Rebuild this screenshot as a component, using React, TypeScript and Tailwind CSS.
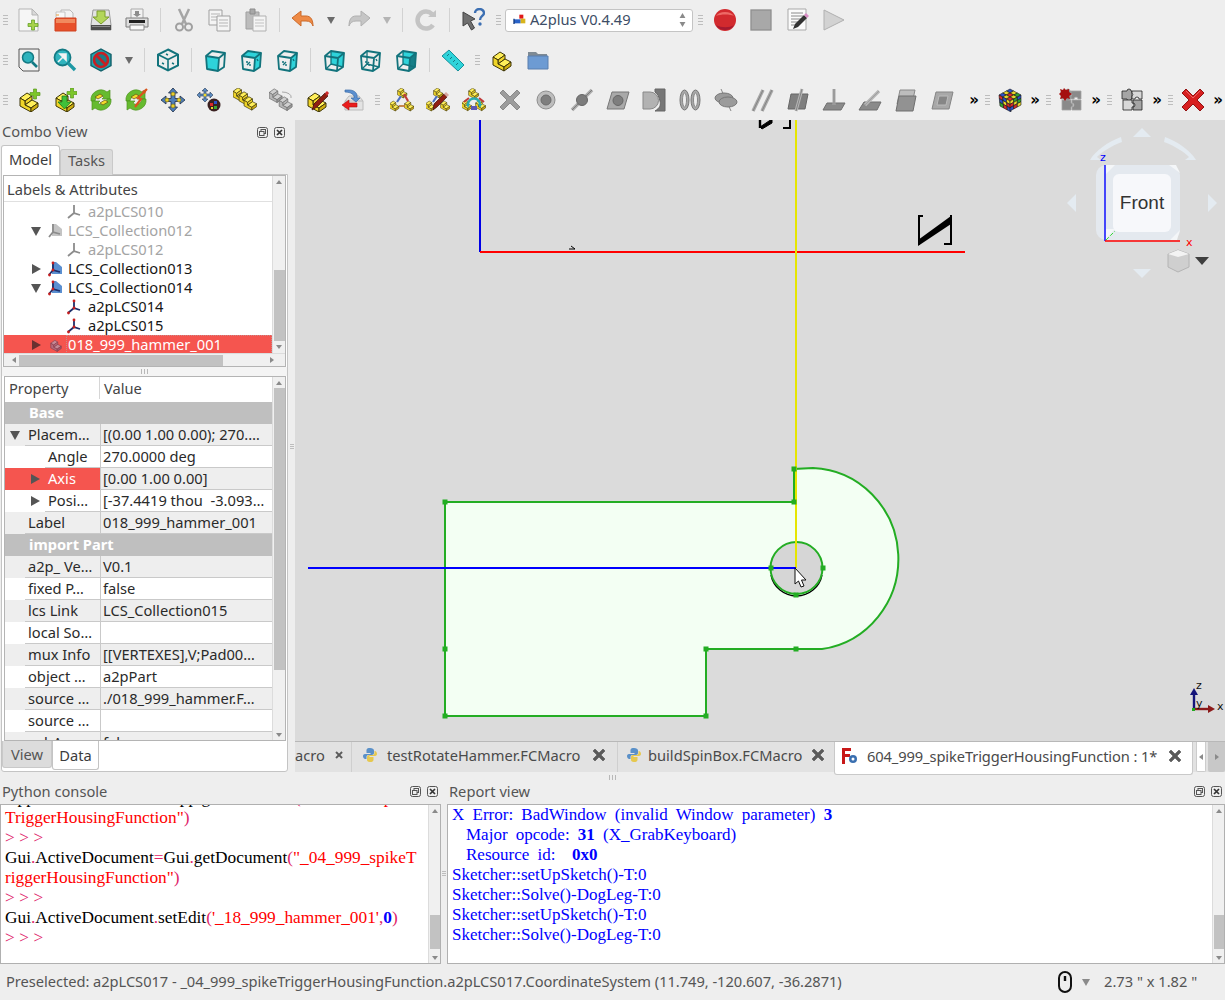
import React from "react";

const UI = { fontFamily: '"Noto Sans", sans-serif' };
const SERIF = { fontFamily: '"Liberation Serif", serif' };

const Svg = ({ children, s = 24 }: { children: React.ReactNode; s?: number }) => (
  <svg width={s} height={s} viewBox="0 0 24 24" fill="none">{children}</svg>
);

const Block = ({ t = "", c = "y" }: { t?: string; c?: "y" | "g" | "r" }) => {
  const p = {
    y: ["#ffef5a", "#f0d528", "#cfae10", "#3d3508"],
    g: ["#cfcfcf", "#b5b5b5", "#9a9a9a", "#6f6f6f"],
    r: ["#c58a96", "#b56a7a", "#a25568", "#7d3a4a"],
  }[c];
  return (
    <g transform={t} stroke={p[3]} strokeWidth="1" strokeLinejoin="round">
      <polygon points="3,9 10,4 15,7 8,12" fill={p[0]} />
      <polygon points="8,12 15,7 15,11 8,16" fill={p[1]} />
      <polygon points="8,16 15,11 21,14 14,19" fill={p[0]} />
      <polygon points="3,9 8,12 8,16 14,19 14,23 3,17" fill={p[1]} />
      <polygon points="14,19 21,14 21,18 14,23" fill={p[2]} />
    </g>
  );
};

const Plus = ({ x = 18, y = 6, c = "#7cc62a" }: { x?: number; y?: number; c?: string }) => (
  <path d={`M${x - 1.5} ${y - 5}h3v3.5h3.5v3h-3.5v3.5h-3v-3.5h-3.5v-3h3.5z`} fill={c} stroke="#5a9a1c" strokeWidth=".7" />
);

const Cube = ({ f = [], hidden = false, marks = false }: { f?: string[]; hidden?: boolean; marks?: boolean }) => {
  const faces: Record<string, string> = {
    front: "3,8 16,10 15,23 4,21",
    top: "3,8 9,3 22,5 16,10",
    right: "16,10 22,5 21,19 15,23",
    back: "9,3 22,5 21,19 9,16",
    left: "3,8 9,3 9,16 4,21",
  };
  return (
    <Svg>
      {f.map((k) => <polygon key={k} points={faces[k]} fill={k === "right" && f.includes("back") ? "#157f88" : "#2ed3da"} />)}
      <g stroke="#12737c" strokeWidth="1.8" strokeLinejoin="round">
        <polygon points="3,8 9,3 22,5 21,19 15,23 4,21" />
        <path d="M3 8L16 10L22 5M16 10L15 23" />
        {hidden && <path d="M9 3L9 16L21 19M9 16L4 21" strokeWidth="1.3" />}
      </g>
      {marks && <path d="M8 17l3-3M7 14h2M11 18v-2M18 11l1 2" stroke="#12737c" strokeWidth="1.4" />}
    </Svg>
  );
};

const GR = { fill: "#9b9b9b", stroke: "#777777", strokeWidth: 1 };

const RubikFace = ({ o, u, v, cs }: { o: number[]; u: number[]; v: number[]; cs: string[] }) => (
  <g stroke="#161616" strokeWidth=".6">
    {cs.map((c, k) => {
      const i = k % 3;
      const j = Math.floor(k / 3);
      const pt = (a: number, b: number) => `${o[0] + (u[0] * a) / 3 + (v[0] * b) / 3},${o[1] + (u[1] * a) / 3 + (v[1] * b) / 3}`;
      return <polygon key={k} points={`${pt(i, j)} ${pt(i + 1, j)} ${pt(i + 1, j + 1)} ${pt(i, j + 1)}`} fill={c} />;
    })}
  </g>
);

const PuzzleSet = ({ a, b, s }: { a: string; b: string; s: string }) => (
  <>
    <path d="M2 3h5a2 2 0 0 1 4 0h1v8h-1a2 2 0 0 1-4 0H2z" fill={a} stroke={s} strokeWidth=".8" />
    <path d="M12 3h10v8h-3a2 2 0 0 0-4 0h-3v-3a2 2 0 0 0 0-3z" fill={b} stroke={s} strokeWidth=".8" />
    <path d="M3 12h9v3a2 2 0 0 1 0 4v3H3z" fill={b} stroke={s} strokeWidth=".8" />
    <path d="M13 12h9v10h-9v-3a2 2 0 0 0 0-4z" fill={a} stroke={s} strokeWidth=".8" />
  </>
);

const Icons: Record<string, React.ReactNode> = {
  newdoc: (
    <Svg>
      <path d="M2 1h13l6 6v16H2z" fill="#f6f6f6" stroke="#b5b5b5" />
      <path d="M15 1v6h6z" fill="#d9d9d9" stroke="#b5b5b5" />
      <Plus x={16} y={17} c="#a6d24a" />
    </Svg>
  ),
  open: (
    <Svg>
      <path d="M8 2h9l3 3v8H8z" fill="#f3f3f3" stroke="#b9b9b9" />
      <path d="M3 4h9v9H3z" fill="#f8f8f8" stroke="#c4c4c4" />
      <path d="M3 7h3" stroke="#e8a040" />
      <path d="M2 11l1-1h20v13H2z" fill="#e8502a" stroke="#cf4320" />
      <path d="M3 11h19v4H3z" fill="#f18a5e" />
    </Svg>
  ),
  save: (
    <Svg>
      <path d="M4 2h16l2 15v5H2v-5z" fill="#e3e3e3" stroke="#9a9a9a" />
      <path d="M2 17h20v5H2z" fill="#4d4d4d" />
      <path d="M3 18h18v1H3z" fill="#8a8a8a" />
      <path d="M8 3h8v6h4l-8 7-8-7h4z" fill="#b3d65a" stroke="#7d9e2d" />
    </Svg>
  ),
  print: (
    <Svg>
      <path d="M6 1h12v10H6z" fill="#f2f2f2" stroke="#aaa" />
      <path d="M10 3h4v3h2l-4 3-4-3h2z" fill="#8d8d8d" />
      <path d="M1 10h22v9H1z" fill="#dcdcdc" stroke="#7c7c7c" />
      <path d="M4 12h16v3H4z" fill="#222" />
      <path d="M5 17h14v5H5z" fill="#fafafa" stroke="#888" />
    </Svg>
  ),
  cut: (
    <Svg>
      <path d="M7 1l7 15M17 1l-7 15" stroke="#a5a5a5" strokeWidth="2.5" />
      <circle cx="7.5" cy="19" r="3.5" stroke="#a0a0a0" strokeWidth="2" />
      <circle cx="16.5" cy="19" r="3.5" stroke="#a0a0a0" strokeWidth="2" />
    </Svg>
  ),
  copy: (
    <Svg>
      <path d="M1 2h13v15H1z" fill="#f4f4f4" stroke="#9f9f9f" />
      <path d="M3 6h9M3 9h9M3 12h9" stroke="#b5b5b5" />
      <path d="M9 8h13v15H9z" fill="#f4f4f4" stroke="#9f9f9f" />
      <path d="M11 12h9M11 15h9M11 18h9" stroke="#b5b5b5" />
    </Svg>
  ),
  paste: (
    <Svg>
      <path d="M2 4h13v17H2z" fill="#bcbcbc" stroke="#9f9f9f" />
      <path d="M6 1h5v5H6z" fill="#a8a8a8" stroke="#8c8c8c" />
      <path d="M9 8h13v15H9z" fill="#f4f4f4" stroke="#b0b0b0" />
      <path d="M11 12h9M11 15h9M11 18h9" stroke="#c2c2c2" />
    </Svg>
  ),
  undo: (
    <Svg>
      <path d="M10 4v5h5c5 0 7 4 7 10-1-3-3-5-7-5h-5v5L1 11z" transform="translate(0 -1)" fill="#ee8a45" stroke="#cc6a2a" strokeLinejoin="round" />
    </Svg>
  ),
  redo: (
    <Svg>
      <path d="M14 4v5H9c-5 0-7 4-7 10 1-3 3-5 7-5h5v5l9-8z" transform="translate(0 -1)" fill="#c6c6c6" stroke="#b0b0b0" strokeLinejoin="round" />
    </Svg>
  ),
  refresh: (
    <Svg>
      <path d="M19 17a8.5 8.5 0 1 1-1-11" stroke="#c4c4c4" strokeWidth="4.5" />
      <path d="M14 9h8V2z" fill="#c4c4c4" />
    </Svg>
  ),
  help: (
    <Svg>
      <path d="M3 3l12 7-4.500 2 4 7-3 2-4-7L3 17z" fill="#6f6f6f" stroke="#444" strokeLinejoin="round" transform="translate(-1 1)" />
      <path d="M14 5c0-2.500 2-4 4.500-4S23 3 23 5c0 3-4 3-4 7" stroke="#3c6fb2" strokeWidth="2.400" />
      <circle cx="19" cy="16" r="1.700" fill="#3c6fb2" />
    </Svg>
  ),
  record: (
    <Svg>
      <circle cx="12" cy="12" r="11" fill="#d22a2e" />
      <path d="M3 8a10 7 0 0 1 18 0c-4-2-13-2-18 0z" fill="#ed6a66" />
      <path d="M3 17a10 9 0 0 0 18 0c-4 3-13 3-18 0z" fill="#a51a30" />
    </Svg>
  ),
  stop: (
    <Svg>
      <rect x="2" y="2" width="20" height="20" fill="#a8a8a8" stroke="#8f8f8f" strokeWidth="1.300" />
    </Svg>
  ),
  macro: (
    <Svg>
      <path d="M3 1h18v21H3z" fill="#fbfbfb" stroke="#a9a9a9" />
      <path d="M6 5h12M6 8h12M6 11h12M6 14h7M6 17h4" stroke="#8a8a8a" />
      <path d="M8 21l2-5 9-9 3 3-9 9z" fill="#333" />
      <path d="M19 7l2-2 3 3-2 2z" fill="#d88cc4" />
    </Svg>
  ),
  play: (
    <Svg>
      <path d="M3 2l20 10L3 22z" fill="#d2d2d2" stroke="#b0b0b0" />
    </Svg>
  ),
  fitall: (
    <Svg>
      <path d="M2 1h20v22H6l-4-4z" fill="#f1f1f1" stroke="#555" />
      <circle cx="11" cy="9.500" r="5.500" fill="#2fb3bd" stroke="#137a84" strokeWidth="1.500" />
      <path d="M15 14l5 5" stroke="#137a84" strokeWidth="2.600" />
    </Svg>
  ),
  fitsel: (
    <Svg>
      <circle cx="9.500" cy="9.500" r="8" fill="#2fb3bd" stroke="#137a84" strokeWidth="1.800" />
      <path d="M15 15l7 7" stroke="#1d98a4" strokeWidth="3.400" />
      <path d="M5 14l7-7M7 6h6v6z" stroke="#f3f3f3" strokeWidth="1.600" fill="#f3f3f3" />
    </Svg>
  ),
  nodraw: (
    <Svg>
      <path d="M12 1l10 5.500v11L12 23 2 17.500v-11z" fill="#22a3ae" stroke="#12606a" strokeWidth="1.400" />
      <circle cx="12" cy="12" r="7" stroke="#c81e22" strokeWidth="2.600" fill="#1b7c86" />
      <path d="M7 7l10 10" stroke="#c81e22" strokeWidth="2.600" />
    </Svg>
  ),
  iso: (
    <Svg>
      <path d="M12 1.500l10 5v11l-10 5-10-5v-11z" stroke="#12737c" strokeWidth="2" />
      <path d="M2 6.500l10 5 10-5M12 11.500v11" stroke="#12737c" strokeWidth="1.600" />
      <path d="M6 15l2 1M16 15l2 1M10 6l2 1" stroke="#12737c" strokeWidth="1.400" />
    </Svg>
  ),
  front: <Cube f={["front"]} />,
  top: <Cube f={["top", "right"]} marks />,
  right: <Cube f={["right"]} marks />,
  rear: <Cube f={["back"]} hidden />,
  bottom: <Cube hidden marks />,
  leftv: <Cube f={["back", "right"]} hidden />,
  ruler: (
    <Svg>
      <path d="M1 8l7-6 15 15-6 6z" fill="#2ed3da" stroke="#17909a" />
      <path d="M6 8l2-2M9 11l2-2M12 14l2-2M15 17l2-2" stroke="#137a84" />
    </Svg>
  ),
  part: <Svg><Block /></Svg>,
  folder: (
    <Svg>
      <path d="M2 4h8l2 2h9v4H2z" fill="#7e8a94" />
      <path d="M2 8h20v13H2z" fill="#6d9bd3" stroke="#5a7fae" />
    </Svg>
  ),
  a1: <Svg><Block t="translate(0 1)" /><Plus x={18} y={6} /></Svg>,
  a2: (
    <Svg>
      <Block t="translate(0 1)" />
      <Plus x={19} y={5} />
      <path d="M9 8h5v6h4l-6.500 7L5 14h4z" fill="#3fc03a" stroke="#217a1d" strokeWidth=".8" />
    </Svg>
  ),
  a3: (
    <Svg>
      <path d="M2 13a10 10 0 0 1 16-9l3-2v9h-8l2-2c-4-3-8-1-9 4z" fill="#66bb2f" stroke="#4d931f" strokeWidth=".7" />
      <path d="M22 11a10 10 0 0 1-16 9l-3 2v-9h8l-2 2c4 3 8 1 9-4z" fill="#66bb2f" stroke="#4d931f" strokeWidth=".7" />
      <path d="M6 9l5-3 3 2-5 3zM11 15l5-3 3 2-5 3z" fill="#f1d92a" stroke="#5f5310" strokeWidth=".7" />
    </Svg>
  ),
  a4: (
    <Svg>
      <path d="M1 13a10 10 0 0 1 16-9l3-2v9h-8l2-2c-4-3-8-1-9 4z" fill="#66bb2f" stroke="#4d931f" strokeWidth=".7" />
      <path d="M21 11a10 10 0 0 1-16 9l-3 2v-9h8l-2 2c4 3 8 1 9-4z" fill="#66bb2f" stroke="#4d931f" strokeWidth=".7" />
      <path d="M6 9l5-3 3 2-5 3z" fill="#f1d92a" stroke="#5f5310" strokeWidth=".7" />
      <path d="M22 1l-9 9 3 1-6 8" stroke="#d9541e" strokeWidth="2.200" />
      <path d="M22 1l-5 2 3 3z" fill="#d9541e" />
    </Svg>
  ),
  a5: (
    <Svg>
      <path d="M12 0l4.500 5h-2.500v5.500H19V8l5 4-5 4v-2.500h-5V19h2.500L12 24l-4.500-5H10v-5.500H5V16l-5-4 5-4v2.500h5V5H7.500z" fill="#4f7fb8" stroke="#1f2d45" strokeWidth=".8" />
      <circle cx="12" cy="6" r="2" fill="#e8cf2a" stroke="#5f5310" strokeWidth=".5" />
      <circle cx="6" cy="12" r="2" fill="#e8cf2a" stroke="#5f5310" strokeWidth=".5" />
      <circle cx="18" cy="12" r="2" fill="#e8cf2a" stroke="#5f5310" strokeWidth=".5" />
      <circle cx="12" cy="18" r="2" fill="#e8cf2a" stroke="#5f5310" strokeWidth=".5" />
    </Svg>
  ),
  a6: (
    <Svg>
      <path d="M7 0l3 3H8v3h4V4l3 3-3 3V8H8v3h2l-3 3-3-3h2V8H2v2L-1 7l3-3v2h4V3H4z" transform="translate(1 0)" fill="#5b8ac0" stroke="#2c3e58" strokeWidth=".6" />
      <circle cx="8" cy="7" r="1.500" fill="#f1d92a" />
      <circle cx="17" cy="17" r="6.500" fill="#3a2020" />
      <path d="M13 15h3v3h-3z" fill="#d92a2a" />
      <path d="M17 13h3v3h-3z" fill="#2a52c8" />
      <path d="M17 18h3v3h-3z" fill="#37a533" />
      <path d="M14 19h2v2h-2z" fill="#e5d32a" />
    </Svg>
  ),
  a7: <Svg><Block t="translate(-2 -3) scale(.7)" /><Block t="translate(4 1) scale(.7)" /><Block t="translate(9 6) scale(.7)" /></Svg>,
  a8: (
    <Svg>
      <Block t="translate(-2 -2) scale(.72)" c="g" />
      <Block t="translate(8 6) scale(.72)" c="g" />
      <path d="M13 4a9 5 0 0 1 9 6" stroke="#a8a8a8" />
    </Svg>
  ),
  a9: (
    <Svg>
      <Block t="translate(0 1)" />
      <path d="M7 22l2-6 11-11 3 3-11 11z" fill="#8f1e12" stroke="#3a1008" strokeWidth=".7" />
      <path d="M20 5l2-2 2 2-2 3z" fill="#cf2a2a" />
    </Svg>
  ),
  a10: (
    <Svg>
      <path d="M4 13l4-5h10l4 5v9H4z" fill="#e3e3e3" stroke="#bbb" />
      <path d="M4 13h18" stroke="#bbb" />
      <path d="M4 2h4c6 0 9 4 8 8h3l-4 4-5-4h3c1-3-3-6-9-6z" fill="#5a8fd0" stroke="#3a6aa6" strokeWidth=".7" />
      <path d="M1 17l7-5v3h8v4H8v3z" fill="#ea1c1c" stroke="#a71010" strokeWidth=".6" />
    </Svg>
  ),
  c1: (
    <Svg>
      <Block t="translate(6 -2) scale(.52)" />
      <Block t="translate(-2 11) scale(.52)" />
      <Block t="translate(13 11) scale(.52)" />
      <path d="M7 14l4-6" stroke="#4a6fc0" strokeWidth="2.200" />
      <path d="M14 6l4 7" stroke="#c03a3a" strokeWidth="2.200" />
      <path d="M9 18h6" stroke="#c07a3a" strokeWidth="1.800" />
    </Svg>
  ),
  c2: (
    <Svg>
      <Block t="translate(6 -2) scale(.52)" />
      <Block t="translate(-2 11) scale(.52)" />
      <Block t="translate(13 11) scale(.52)" />
      <path d="M7 14l4-6" stroke="#4a6fc0" strokeWidth="2.200" />
      <path d="M7 22l1-6 10-10 3 3-10 10z" fill="#8f1e12" stroke="#3a1008" strokeWidth=".7" />
      <path d="M18 6l2-2 3 3-2 2z" fill="#d8a6a0" />
    </Svg>
  ),
  c3: (
    <Svg>
      <Block t="translate(5 -2) scale(.55)" />
      <Block t="translate(-2 10) scale(.55)" c="y" />
      <Block t="translate(12 10) scale(.55)" />
      <path d="M2 14l5-4M22 14l-5-4" stroke="#c03a3a" strokeWidth="2" />
      <path d="M6 16a6 6 0 1 1 12 1" stroke="#2baab0" strokeWidth="2.400" />
      <path d="M6 20l-2-4h4zM18 20l-2-4h4z" fill="#2baab0" />
      <path d="M9 18h6v4H9z" fill="#5b57b5" />
    </Svg>
  ),
  x: (
    <Svg>
      <path d="M2 5l3-3 7 7 7-7 3 3-7 7 7 7-3 3-7-7-7 7-3-3 7-7z" fill="#9c9c9c" stroke="#8a8a8a" strokeLinejoin="round" />
    </Svg>
  ),
  g1: (
    <Svg>
      <circle cx="12" cy="12" r="9" fill="#bdbdbd" stroke="#8e8e8e" />
      <circle cx="12" cy="12" r="5" fill="#7e7e7e" stroke="#6b6b6b" />
    </Svg>
  ),
  g2: (
    <Svg>
      <path d="M2 22L22 2" stroke="#aaa" strokeWidth="3.500" />
      <path d="M2 22L22 2" stroke="#7c7c7c" strokeWidth="1" />
      <circle cx="12" cy="12" r="5.500" fill="#7c7c7c" stroke="#666" />
    </Svg>
  ),
  g3: (
    <Svg>
      <path d="M6 4h17l-5 17H1z" {...GR} fill="#a9a9a9" />
      <circle cx="12" cy="12.500" r="5" fill="#7e7e7e" stroke="#666" />
    </Svg>
  ),
  g4: (
    <Svg>
      <path d="M1 4h7a8 8 0 0 1 0 17H1z" fill="#b2b2b2" stroke="#888" />
      <path d="M13 1h10v22H13c5-3 6-6 5-10s-2-7-5-9z" fill="#777" stroke="#666" />
    </Svg>
  ),
  g5: (
    <Svg>
      <ellipse cx="6.500" cy="12" rx="4.500" ry="10" fill="#a8a8a8" stroke="#777" />
      <ellipse cx="6.500" cy="12" rx="2" ry="7" fill="#eeeeee" stroke="#888" />
      <ellipse cx="17.500" cy="12" rx="4.500" ry="10" fill="#a8a8a8" stroke="#777" />
      <ellipse cx="17.500" cy="12" rx="2" ry="7" fill="#eeeeee" stroke="#888" />
    </Svg>
  ),
  g6: (
    <Svg>
      <path d="M7 1l10 22" stroke="#888" />
      <ellipse cx="10" cy="10" rx="9" ry="5" {...GR} />
      <ellipse cx="14" cy="14" rx="9" ry="5" {...GR} />
    </Svg>
  ),
  g7: (
    <Svg>
      <path d="M3 23L13 2M12 23L22 2" stroke="#a8a8a8" strokeWidth="3.400" />
      <path d="M3 23L13 2M12 23L22 2" stroke="#848484" strokeWidth="1" />
    </Svg>
  ),
  g8: (
    <Svg>
      <path d="M5 6h17l-3 15H2z" fill="#7f7f7f" stroke="#666" />
      <path d="M10 23L16 1" stroke="#b5b5b5" strokeWidth="3" />
      <path d="M10 23L16 1" stroke="#777" strokeWidth=".8" />
    </Svg>
  ),
  g9: (
    <Svg>
      <path d="M1 22l4-7h18l-4 7z" fill="#8a8a8a" stroke="#6f6f6f" />
      <path d="M12 1v16" stroke="#a8a8a8" strokeWidth="3" />
      <path d="M12 1v16" stroke="#888" strokeWidth=".8" />
    </Svg>
  ),
  g10: (
    <Svg>
      <path d="M1 22l5-8h17l-4 8z" fill="#8a8a8a" stroke="#6f6f6f" />
      <path d="M7 17L21 3" stroke="#b5b5b5" strokeWidth="3.200" />
      <path d="M7 17L21 3" stroke="#999" strokeWidth=".8" />
    </Svg>
  ),
  g11: (
    <Svg>
      <path d="M6 2h15l-3 14H3z" fill="#bdbdbd" stroke="#8a8a8a" />
      <path d="M5 8h17l-3 15H2z" fill="#929292" stroke="#6f6f6f" />
    </Svg>
  ),
  g12: (
    <Svg>
      <path d="M6 4h17l-4 17H2z" fill="#a8a8a8" stroke="#858585" />
      <path d="M9 8h9l-2 9H7z" fill="#868686" stroke="#bbb" />
    </Svg>
  ),
  rubik: (
    <Svg>
      <RubikFace o={[12, 1]} u={[11, 6]} v={[-11, 6]} cs={["#2a4fc8", "#e8d52a", "#2fa52f", "#e8d52a", "#d82a2a", "#e8d52a", "#2a4fc8", "#e8d52a", "#d82a2a"]} />
      <RubikFace o={[1, 7]} u={[11, 6]} v={[1, 11]} cs={["#d82a2a", "#2a4fc8", "#e8d52a", "#2a4fc8", "#e8d52a", "#d82a2a", "#2fa52f", "#d82a2a", "#2a4fc8"]} />
      <RubikFace o={[12, 13]} u={[11, -6]} v={[0, 10]} cs={["#e8d52a", "#2fa52f", "#2a4fc8", "#d82a2a", "#e8d52a", "#2fa52f", "#2a4fc8", "#d82a2a", "#e8d52a"]} />
    </Svg>
  ),
  puzzleR: (
    <Svg>
      <PuzzleSet a="#8a8a8a" b="#8a8a8a" s="#a5a5a5" />
      <path d="M5 0l2 2 3-1v3l3 2-3 2 1 3-3-1-2 3-2-3-3 1 1-3-2-2 2-2-1-3 3 1z" fill="#a50f0f" />
    </Svg>
  ),
  puzzle: (
    <Svg>
      <PuzzleSet a="#a5a5a5" b="#d8d8d8" s="#222" />
    </Svg>
  ),
  redx: (
    <Svg>
      <path d="M1 5l4-4 7 7 7-7 4 4-7 7 7 7-4 4-7-7-7 7-4-4 7-7z" fill="#d71f1f" stroke="#931212" strokeLinejoin="round" />
      <path d="M5 3l7 7 7-7" stroke="#ef6a6a" strokeWidth=".9" />
    </Svg>
  ),
  wb: (
    <Svg>
      <path d="M11 4h6v6h-6z" fill="#e01919" />
      <path d="M3 11h10v6H3z" fill="#2a63c8" />
      <path d="M13 10h7v7h-7z" fill="#d8b41c" />
      <path d="M3 10v8" stroke="#123a80" strokeWidth="2" />
    </Svg>
  ),
};

const Ic = ({ n, w = 36 }: { n: string; w?: number }) => (
  <div className="flex shrink-0 items-center justify-center" style={{ width: w }}>{Icons[n]}</div>
);

const Grip = ({ w = 14 }: { w?: number }) => (
  <div className="flex shrink-0 flex-col items-center gap-[2px]" style={{ width: w }}>
    <div className="h-px w-[5px] bg-[#bdbdbd]" />
    <div className="h-px w-[5px] bg-[#bdbdbd]" />
    <div className="h-px w-[5px] bg-[#bdbdbd]" />
    <div className="h-px w-[5px] bg-[#bdbdbd]" />
  </div>
);

const Sep = () => <div className="mx-[5px] h-[24px] w-px shrink-0 bg-[#d2d2d2]" />;

const Drop = ({ c = "#6b6b6b" }: { c?: string }) => (
  <div className="flex w-[20px] shrink-0 items-center justify-center">
    <svg width="8" height="8" viewBox="0 0 8 8"><path d="M0 1h8L4 8z" fill={c} /></svg>
  </div>
);

const More = () => (
  <div className="w-[20px] shrink-0 text-center text-[15px] leading-none font-bold text-black" style={{ fontFamily: '"DejaVu Sans", sans-serif' }}>»</div>
);

const DockBtns = ({ className = "" }: { className?: string }) => (
  <div className={`flex items-center gap-[6px] ${className}`}>
    <svg width="11" height="11" viewBox="0 0 11 11" fill="none" stroke="#555">
      <rect x=".5" y=".5" width="10" height="10" rx="2" />
      <rect x="4" y="2.500" width="4.500" height="4" />
      <rect x="2.500" y="4.500" width="4.500" height="4" fill="#eee" />
    </svg>
    <svg width="11" height="11" viewBox="0 0 11 11" fill="none" stroke="#555">
      <rect x=".5" y=".5" width="10" height="10" rx="2" />
      <path d="M3 3l5 5M8 3l-5 5" strokeWidth="1.700" stroke="#333" />
    </svg>
  </div>
);

const Tri = ({ open = false, c = "#555" }: { open?: boolean; c?: string }) => (
  <svg width="10" height="10" viewBox="0 0 10 10">
    {open ? <path d="M0 1h10L5 10z" fill={c} /> : <path d="M1 0l9 5-9 5z" fill={c} />}
  </svg>
);

const Axes = ({ dim = false }: { dim?: boolean }) => (
  <svg width="16" height="16" viewBox="0 0 16 16" fill="none">
    <path d="M8 1v8l6 2M8 9l-6 5" stroke={dim ? "#8c8c8c" : "#1e2f6b"} strokeWidth="1.800" />
    {!dim && <><circle cx="8" cy="2" r="1.400" fill="#c81e1e" /><circle cx="8" cy="9" r="1.400" fill="#c81e1e" /><circle cx="2.500" cy="14" r="1.400" fill="#c81e1e" /></>}
  </svg>
);

const Coll = ({ dim = false }: { dim?: boolean }) => (
  <svg width="16" height="16" viewBox="0 0 16 16" fill="none">
    <path d="M5 1h4l6 5v7H5z" fill={dim ? "#c4c4c4" : "#5b8fd0"} />
    <path d="M6 1v8l7 2M6 9l-4 5" stroke={dim ? "#8c8c8c" : "#1e2f6b"} strokeWidth="1.800" />
    {!dim && <><circle cx="6" cy="2" r="1.400" fill="#c81e1e" /><circle cx="6" cy="9" r="1.400" fill="#c81e1e" /><circle cx="2.500" cy="14" r="1.400" fill="#c81e1e" /></>}
  </svg>
);

const TreeLeaf = ({ t, dim = false }: { t: string; dim?: boolean }) => (
  <div className="flex h-[19px] items-center pl-[62px]">
    <Axes dim={dim} />
    <span className={`mb-[2px] ml-[6px] ${dim ? "text-[#a4a4a4]" : "text-[#161616]"}`}>{t}</span>
  </div>
);
const TreeColl = ({ t, open = false, dim = false }: { t: string; open?: boolean; dim?: boolean }) => (
  <div className="flex h-[19px] items-center pl-[27px]">
    <Tri open={open} />
    <div className="ml-[6px]"><Coll dim={dim} /></div>
    <span className={`mb-[2px] ml-[5px] ${dim ? "text-[#a4a4a4]" : "text-[#161616]"}`}>{t}</span>
  </div>
);

type Row = { n?: string; v?: string; g?: string; ind?: number; tri?: "o" | "c"; red?: boolean };
const rows: Row[] = [
  { g: "Base" },
  { n: "Placem…", v: "[(0.00 1.00 0.00); 270.…", tri: "o" },
  { n: "Angle", v: "270.0000 deg", ind: 1 },
  { n: "Axis", v: "[0.00 1.00 0.00]", ind: 1, tri: "c", red: true },
  { n: "Posi…", v: "[-37.4419 thou  -3.093…", ind: 1, tri: "c" },
  { n: "Label", v: "018_999_hammer_001" },
  { g: "import Part" },
  { n: "a2p_ Ve…", v: "V0.1" },
  { n: "fixed P…", v: "false" },
  { n: "lcs Link", v: "LCS_Collection015" },
  { n: "local So…", v: "" },
  { n: "mux Info", v: "[[VERTEXES],V;Pad00…" },
  { n: "object …", v: "a2pPart" },
  { n: "source …", v: "./018_999_hammer.F…" },
  { n: "source …", v: "" },
  { n: "subAss…", v: "false" },
];

const PropRow = ({ r, i }: { r: Row; i: number }) => {
  if (r.g)
    return <div className="flex h-[22px] shrink-0 items-center bg-[#bfbfbf] pb-[2px] pl-[24px] font-bold text-white">{r.g}</div>;
  const alt = i % 2 === 1;
  const bg = alt ? "bg-[#eeeeee]" : "bg-white";
  return (
    <div className={`flex h-[22px] shrink-0 ${bg} text-[#2a2a2a]`}>
      <div className={`flex w-[95px] shrink-0 ${r.red ? "bg-[#f5554f] text-white" : ""}`}>
        <div className="flex shrink-0 items-center justify-end pr-[5px]" style={{ width: r.ind ? 40 : 20 }}>
          {r.tri && <Tri open={r.tri === "o"} />}
        </div>
        <div className={`flex min-w-0 flex-1 items-center whitespace-nowrap border-b pb-[2px] pl-[3px] ${r.red ? "border-transparent" : "border-[#c9c9c9]"}`}>{r.n}</div>
      </div>
      <div className="flex flex-1 items-center overflow-hidden whitespace-pre border-b border-l border-[#c9c9c9] pb-[2px] pl-[2px]">{r.v}</div>
    </div>
  );
};

const ScrollArrow = ({ d }: { d: "u" | "d" | "l" | "r" }) => {
  const p = { u: "M0 5L3 1L6 5z", d: "M0 1L3 5L6 1z", l: "M5 0L1 3L5 6z", r: "M1 0L5 3L1 6z" }[d];
  return <svg width="6" height="6" viewBox="0 0 6 6"><path d={p} fill="#8a8a8a" /></svg>;
};

const TabClose = () => (
  <svg width="14" height="14" viewBox="0 0 14 14">
    <path d="M1 3l2-2 4 4 4-4 2 2-4 4 4 4-2 2-4-4-4 4-2-2 4-4z" fill="#5a5a5a" stroke="#444" strokeWidth=".5" strokeLinejoin="round" />
  </svg>
);

const Py = () => (
  <svg width="14" height="16" viewBox="0 0 14 16">
    <path d="M7 1C3 1 3.500 3 3.500 4.500V6h4v1H2C.5 7 0 8.500 0 9s.5 3 2 3h1.500v-2c0-1.500 1-2 2.500-2h3c1 0 2-.8 2-2V3.500C11 2 9.500 1 7 1z" fill="#5a90c8" />
    <path d="M7 15c4 0 3.500-2 3.500-3.500V10h-4V9H12c1.500 0 2-1.500 2-2s-.5-3-2-3h-.5v2c0 1.500-1 2-2.500 2H6C5 8 4 8.800 4 10v2.500C4 14 4.500 15 7 15z" fill="#e6c84e" />
  </svg>
);

const Punct = ({ children }: { children: React.ReactNode }) => <span className="text-[#e0246a]">{children}</span>;
const Str = ({ children }: { children: React.ReactNode }) => <span className="text-[#ff0000]">{children}</span>;
const Prompt = () => <div className="h-[20px] tracking-[4.500px] text-[#e0246a]">{">>>"}</div>;

const Viewport = () => (
  <svg className="absolute inset-0" width="930" height="621" viewBox="295 120 930 621" fill="none">
    <path d="M480 120V252" stroke="#0000e6" strokeWidth="2" />
    <path d="M480 252H965" stroke="#ff0000" strokeWidth="2" />
    <path d="M760 120V128" stroke="#000" strokeWidth="2.400" />
    <path d="M760 127L772 119L772 123L762 129Z" fill="#000" stroke="#000" />
    <path d="M790 120V128H783" stroke="#000" strokeWidth="2" />
    <path d="M571 246l4 3M569 249h6" stroke="#000" strokeWidth="1" />
    <path d="M919 245V216h4" stroke="#000" strokeWidth="2" />
    <path d="M951 215V244H944" stroke="#000" strokeWidth="2" />
    <path d="M918 240L951 216V224L918 246Z" fill="#000" />
    <path d="M445 502H794V469L813 468A89 91 0 0 1 822 649H706V716H445Z" fill="#f3fff3" stroke="#23ad23" strokeWidth="2" />
    <circle cx="796.500" cy="568" r="26" fill="#d6d6d6" />
    <path d="M771 575A26 26 0 0 0 822 575" stroke="#000" strokeWidth="1.400" />
    <circle cx="796.500" cy="568" r="26" stroke="#23ad23" strokeWidth="2" />
    <path d="M796 120V568" stroke="#e6e600" strokeWidth="2" />
    <path d="M308 568H796" stroke="#0000ff" strokeWidth="2" />
    <g fill="#23ad23">
      {[[445, 502], [794, 502], [794, 469], [706, 649], [796, 649], [445, 649], [445, 716], [706, 716], [823, 568], [771, 568], [796, 595]].map(([x, y]) => (
        <rect key={`${x}-${y}`} x={x - 2.500} y={y - 2.500} width="5" height="5" />
      ))}
    </g>
    <path d="M795 568V584L798.500 581L801 587L804 586L801.500 580L806 580Z" fill="#fff" stroke="#111" strokeWidth="1" strokeLinejoin="round" />

    {/* navigation cube */}
    <g fill="#e4ebf1">
      <path d="M1142 128l9 9h-18z" />
      <path d="M1142 278l9-9h-18z" />
      <path d="M1067 203l9-9v18z" />
      <path d="M1217 203l-9-9v18z" />
      <path d="M1090 160c6-10 18-18 31-23l1 5c-11 4-20 10-25 15l4 3z" />
      <path d="M1196 160c-6-10-18-18-31-23l-1 5c11 4 20 10 25 15l-4 3z" />
    </g>
    <rect x="1096" y="165" width="84" height="75" rx="10" fill="#e4e9ef" />
    <path d="M1105 165h10l-9 9zM1169 165h7l4 8zM1105 240l10-11-9 0zM1180 230l-10 10h7z" fill="#f4f6f8" />
    <rect x="1113" y="174" width="58" height="58" rx="6" fill="#f7f8fb" />
    <text x="1142" y="209" textAnchor="middle" fontSize="19" fill="#333" fontFamily='"Liberation Sans", sans-serif'>Front</text>
    <path d="M1105 165V241" stroke="#0000ff" strokeWidth="1.400" />
    <path d="M1105 241H1180" stroke="#ff0000" strokeWidth="1.400" />
    <path d="M1106 240l9-9" stroke="#33dd33" strokeWidth="1" strokeDasharray="4 2" />
    <text x="1100" y="161" fontSize="11" fill="#0000ff" fontFamily='"DejaVu Sans", sans-serif'>z</text>
    <text x="1186" y="246" fontSize="11" fill="#ff0000" fontFamily='"DejaVu Sans", sans-serif'>x</text>
    <path d="M1168 254l10-4 11 4v13l-11 5-10-5z" fill="#cfcfcf" stroke="#b4b4b4" />
    <path d="M1168 254l10 3 11-3-11-4z" fill="#f3f3f3" />
    <path d="M1195 257h14l-7 8z" fill="#3f3f3f" />

    {/* axis cross */}
    <path d="M1194 709V693" stroke="#14147a" strokeWidth="2.400" />
    <path d="M1194 688l4 7h-8z" fill="#14147a" />
    <path d="M1194 709H1209" stroke="#8b1a1a" strokeWidth="2.400" />
    <path d="M1215 709l-7-4v8z" fill="#8b1a1a" />
    <rect x="1192" y="708" width="3" height="3" fill="#22aa22" />
    <text x="1196" y="689" fontSize="11" fill="#111" fontFamily='"DejaVu Sans", sans-serif'>z</text>
    <text x="1196" y="707" fontSize="11" fill="#111" fontFamily='"DejaVu Sans", sans-serif'>y</text>
    <text x="1217" y="710" fontSize="11" fill="#111" fontFamily='"DejaVu Sans", sans-serif'>x</text>
  </svg>
);

export default function App() {
  return (
    <div className="flex h-[1000px] w-[1225px] flex-col overflow-hidden bg-[#eeeeee] text-[14.670px] text-[#3c3c3c]" style={UI}>
      {/* Toolbars */}
      <div className="flex h-[40px] shrink-0 items-center">
        <Grip w={11} />
        <Ic n="newdoc" /><Ic n="open" /><Ic n="save" /><Ic n="print" />
        <Sep />
        <Ic n="cut" /><Ic n="copy" /><Ic n="paste" />
        <Sep />
        <Ic n="undo" /><Drop /><Ic n="redo" /><Drop c="#b4b4b4" />
        <Sep />
        <Ic n="refresh" />
        <Sep />
        <Ic n="help" />
        <Grip />
        <div className="flex h-[23px] w-[188px] shrink-0 items-center rounded-[3px] border border-[#c4c4c4] bg-white pl-[6px] text-[#3d4d66]">
          <Ic n="wb" w={16} />
          <span className="mb-[2px] ml-[2px] flex-1 whitespace-nowrap">A2plus V0.4.49</span>
          <div className="mr-[6px] flex flex-col gap-[4px]">
            <svg width="7" height="5" viewBox="0 0 7 6"><path d="M0 6L3.500 0L7 6z" fill="#8a8a8a" /></svg>
            <svg width="7" height="5" viewBox="0 0 7 6"><path d="M0 0L3.500 6L7 0z" fill="#8a8a8a" /></svg>
          </div>
        </div>
        <Grip />
        <Ic n="record" /><Ic n="stop" /><Ic n="macro" /><Ic n="play" />
      </div>
      <div className="flex h-[40px] shrink-0 items-center">
        <Grip w={11} />
        <Ic n="fitall" /><Ic n="fitsel" /><Ic n="nodraw" /><Drop />
        <Sep />
        <Ic n="iso" />
        <Sep />
        <Ic n="front" /><Ic n="top" /><Ic n="right" />
        <Sep />
        <Ic n="rear" /><Ic n="bottom" /><Ic n="leftv" />
        <Sep />
        <Ic n="ruler" />
        <Grip w={13} />
        <Ic n="part" /><Ic n="folder" />
      </div>
      <div className="flex h-[40px] shrink-0 items-center">
        <Grip w={11} />
        {["a1", "a2", "a3", "a4", "a5", "a6", "a7", "a8", "a9", "a10"].map((n) => <Ic key={n} n={n} />)}
        <Grip w={13} />
        {["c1", "c2", "c3", "x", "g1", "g2", "g3", "g4", "g5", "g6", "g7", "g8", "g9", "g10", "g11", "g12"].map((n) => <Ic key={n} n={n} />)}
        <div className="ml-[4px]" />
        <More /><Grip w={6} /><div className="ml-[5px]" /><Ic n="rubik" w={30} />
        <More /><Grip w={6} /><div className="ml-[5px]" /><Ic n="puzzleR" w={30} />
        <More /><Grip w={6} /><div className="ml-[5px]" /><Ic n="puzzle" w={30} />
        <More /><Grip w={6} /><div className="ml-[5px]" /><Ic n="redx" w={30} />
        <More />
      </div>

      {/* Main */}
      <div className="flex h-[662px] shrink-0">
        <div className="flex w-[289px] shrink-0 flex-col">
          <div className="flex h-[25px] shrink-0 items-center justify-between pl-[2px] pr-[4px] text-[#555]">
            <span className="mb-[4px]">Combo View</span>
            <DockBtns />
          </div>
          <div className="z-10 flex h-[30px] shrink-0 items-end pl-[1px]">
            <div className="flex h-[30px] w-[59px] items-center justify-center rounded-t-[3px] border border-b-0 border-[#c4c4c4] bg-white pb-[4px] text-[#3c3c3c]">Model</div>
            <div className="flex h-[26px] w-[53px] items-center justify-center rounded-t-[3px] border border-b-0 border-[#c9c9c9] bg-[#dcdcdc] pb-[5px] text-[#555]">Tasks</div>
          </div>
          <div className="-mt-px ml-[1px] mr-[1px] flex h-[598px] flex-col rounded-b-[3px] border border-[#c4c4c4] bg-white">
            <div className="mx-[1px] flex h-[192px] shrink-0 flex-col border border-[#b4b4b4]">
              <div className="flex min-h-0 flex-1">
                <div className="min-w-0 flex-1 overflow-hidden whitespace-nowrap">
                  <div className="flex h-[26px] items-center border-b border-[#e0e0e0] pl-[3px] text-[#444]">Labels &amp; Attributes</div>
                  <TreeLeaf t="a2pLCS010" dim />
                  <TreeColl t="LCS_Collection012" open dim />
                  <TreeLeaf t="a2pLCS012" dim />
                  <TreeColl t="LCS_Collection013" />
                  <TreeColl t="LCS_Collection014" open />
                  <TreeLeaf t="a2pLCS014" />
                  <TreeLeaf t="a2pLCS015" />
                  <div className="flex h-[19px] items-center bg-[#f5554f] pl-[27px] text-white">
                    <Tri c="#6b3030" />
                    <svg className="ml-[8px]" width="14" height="14" viewBox="0 0 24 24"><Block c="r" /></svg>
                    <span className="ml-[3px] flex h-full flex-1 items-center pb-[2px] pl-[2px] outline-1 -outline-offset-1 outline-dotted outline-[#c98a8a]">018_999_hammer_001</span>
                  </div>
                </div>
                <div className="flex w-[13px] shrink-0 flex-col items-center border-l border-[#dcdcdc] bg-[#f0f0f0]">
                  <div className="flex h-[12px] items-center"><ScrollArrow d="u" /></div>
                  <div className="h-[82px]" />
                  <div className="h-[71px] w-[11px] bg-[#c2c2c2]" />
                  <div className="flex-1" />
                  <div className="flex h-[12px] items-center"><ScrollArrow d="d" /></div>
                </div>
              </div>
              <div className="flex h-[13px] shrink-0 items-center border-t border-[#dcdcdc] bg-[#f0f0f0] pl-[7px]">
                <ScrollArrow d="l" />
                <div className="ml-[2px] h-[11px] w-[204px] bg-[#c2c2c2]" />
                <div className="ml-[46px]"><ScrollArrow d="r" /></div>
              </div>
            </div>
            <div className="flex h-[9px] shrink-0 items-center justify-center gap-[1px] bg-[#f4f4f4]">
              <div className="h-[5px] w-px bg-[#b8b8b8]" /><div className="ml-[1px] h-[5px] w-px bg-[#b8b8b8]" /><div className="ml-[1px] h-[5px] w-px bg-[#b8b8b8]" />
            </div>
            <div className="ml-[2px] mr-[1px] flex h-[365px] shrink-0 border border-[#b4b4b4]">
              <div className="flex min-w-0 flex-1 flex-col overflow-hidden">
                <div className="flex h-[25px] shrink-0 items-center bg-white pb-[4px] text-[#444]">
                  <div className="w-[95px] shrink-0 border-r border-[#d6d6d6] pl-[4px]">Property</div>
                  <div className="pl-[4px]">Value</div>
                </div>
                {rows.map((r, i) => <PropRow key={i} r={r} i={i} />)}
              </div>
              <div className="flex w-[13px] shrink-0 flex-col items-center border-l border-[#dcdcdc] bg-[#f0f0f0]">
                <div className="flex h-[11px] items-center"><ScrollArrow d="u" /></div>
                <div className="h-[282px] w-[11px] bg-[#c2c2c2]" />
                <div className="flex-1" />
                <div className="flex h-[11px] items-center"><ScrollArrow d="d" /></div>
              </div>
            </div>
            <div className="flex h-[29px] shrink-0 items-start">
              <div className="flex h-[27px] w-[50px] items-center justify-center rounded-b-[3px] border border-t-0 border-[#c9c9c9] bg-[#dcdcdc] text-[#555]">View</div>
              <div className="flex h-[29px] w-[47px] items-center justify-center rounded-b-[3px] border border-t-0 border-[#c4c4c4] bg-white text-[#3c3c3c]">Data</div>
            </div>
          </div>
        </div>
        <div className="flex w-[6px] shrink-0 flex-col items-center justify-center">
          <div className="mb-[10px] flex flex-col gap-[1px]">
            <div className="h-px w-[4px] bg-[#bdbdbd]" /><div className="h-px w-[4px] bg-[#bdbdbd]" /><div className="h-px w-[4px] bg-[#bdbdbd]" />
          </div>
        </div>
        <div className="flex min-w-0 flex-1 flex-col">
          <div className="relative h-[621px] shrink-0 overflow-hidden bg-[#dbdbdb]">
            <Viewport />
          </div>
          <div className="flex h-[31px] shrink-0 items-stretch border-t border-[#b8b8b8] bg-[#e2e2e2] text-[#4a4a4a]">
            <div className="flex w-[57px] shrink-0 items-center justify-end overflow-hidden border-r border-[#cfcfcf] pb-[4px] pr-[8px]">
              <span className="mr-[10px]">acro</span><TabClose />
            </div>
            <div className="flex w-[266px] shrink-0 items-center border-r border-[#cfcfcf] pb-[4px] pl-[11px]">
              <Py /><span className="ml-[10px] flex-1 whitespace-nowrap">testRotateHammer.FCMacro</span><div className="mr-[11px]"><TabClose /></div>
            </div>
            <div className="flex w-[216px] shrink-0 items-center pb-[4px] pl-[9px]">
              <Py /><span className="ml-[7px] flex-1 whitespace-nowrap">buildSpinBox.FCMacro</span><div className="mr-[9px]"><TabClose /></div>
            </div>
            <div className="flex h-[33px] w-[359px] shrink-0 items-center rounded-b-[3px] border border-t-0 border-[#c9c9c9] bg-white pb-[5px] pl-[6px]">
              <svg width="18" height="18" viewBox="0 0 18 18">
                <path d="M1 1h9v3H4v3h5v3H4v7H1z" fill="#c81818" />
                <circle cx="12" cy="12" r="4" fill="#3a6fb0" />
                <circle cx="12" cy="12" r="1.500" fill="#fff" />
              </svg>
              <span className="ml-[8px] flex-1 whitespace-nowrap tracking-[-0.1px]">604_999_spikeTriggerHousingFunction : 1*</span>
              <div className="mr-[10px]"><TabClose /></div>
            </div>
            <div className="ml-[3px] flex h-[30px] w-[10px] items-center justify-center rounded-b-[2px] border border-t-0 border-[#ccc] bg-white"><ScrollArrow d="l" /></div>
            <div className="ml-[2px] flex h-[30px] w-[17px] items-center justify-center rounded-b-[2px] bg-[#c8c8c8]"><ScrollArrow d="r" /></div>
          </div>
          <div className="flex h-[10px] shrink-0 items-center justify-center pr-[296px]">
            <div className="flex gap-[1px]"><div className="h-[5px] w-px bg-[#b8b8b8]" /><div className="ml-[1px] h-[5px] w-px bg-[#b8b8b8]" /><div className="ml-[1px] h-[5px] w-px bg-[#b8b8b8]" /></div>
          </div>
        </div>
      </div>

      {/* Bottom docks */}
      <div className="flex h-[182px] shrink-0">
        <div className="flex w-[441px] shrink-0 flex-col">
          <div className="flex h-[22px] shrink-0 items-center justify-between pb-[3px] pl-[2px] pr-[3px] text-[#555]">
            <span className="mb-[2px]">Python console</span><DockBtns />
          </div>
          <div className="flex min-h-0 flex-1 border border-[#b0b0b0] bg-white">
            <div className="min-w-0 flex-1 overflow-hidden pl-[4px] text-[17.330px] leading-[20px] whitespace-pre text-black" style={SERIF}>
              <div className="-mt-[17px] h-[20px]">App<Punct>.</Punct>ActiveDocument<Punct>=</Punct>App<Punct>.</Punct>getDocument<Punct>(</Punct><Str>"_04_999_spike</Str></div>
              <div className="h-[20px]"><Str>TriggerHousingFunction"</Str><Punct>)</Punct></div>
              <Prompt />
              <div className="h-[20px]">Gui<Punct>.</Punct>ActiveDocument<Punct>=</Punct>Gui<Punct>.</Punct>getDocument<Punct>(</Punct><Str>"_04_999_spikeT</Str></div>
              <div className="h-[20px]"><Str>riggerHousingFunction"</Str><Punct>)</Punct></div>
              <Prompt />
              <div className="h-[20px]">Gui<Punct>.</Punct>ActiveDocument<Punct>.</Punct>setEdit<Punct>(</Punct><Str>'_18_999_hammer_001'</Str><Punct>,</Punct><span className="font-bold text-[#0000ff]">0</span><Punct>)</Punct></div>
              <Prompt />
            </div>
            <div className="flex w-[12px] shrink-0 flex-col items-center border-l border-[#dcdcdc] bg-[#f0f0f0]">
              <div className="flex h-[11px] items-center"><ScrollArrow d="u" /></div>
              <div className="h-[99px]" />
              <div className="h-[34px] w-[10px] bg-[#c2c2c2]" />
              <div className="flex-1" />
              <div className="flex h-[11px] items-center"><ScrollArrow d="d" /></div>
            </div>
          </div>
        </div>
        <div className="flex w-[6px] shrink-0 items-center justify-center">
          <div className="flex flex-col gap-[1px]"><div className="h-px w-[4px] bg-[#bdbdbd]" /><div className="h-px w-[4px] bg-[#bdbdbd]" /><div className="h-px w-[4px] bg-[#bdbdbd]" /></div>
        </div>
        <div className="flex min-w-0 flex-1 flex-col">
          <div className="flex h-[22px] shrink-0 items-center justify-between pb-[3px] pl-[2px] pr-[3px] text-[#555]">
            <span className="mb-[2px]">Report view</span><DockBtns />
          </div>
          <div className="flex min-h-0 flex-1 border border-[#b0b0b0] bg-white">
            <div className="min-w-0 flex-1 overflow-hidden pl-[4px] text-[17px] leading-[20px] whitespace-pre text-[#0000ff]" style={SERIF}>
              <div className="[word-spacing:4px]">X Error: BadWindow (invalid Window parameter) <b>3</b></div>
              <div className="pl-[14px] [word-spacing:4px]">Major opcode: <b>31</b> (X_GrabKeyboard)</div>
              <div className="pl-[14px] [word-spacing:4px]">Resource id:  <b>0x0</b></div>
              <div>Sketcher::setUpSketch()-T:0</div>
              <div>Sketcher::Solve()-DogLeg-T:0</div>
              <div>Sketcher::setUpSketch()-T:0</div>
              <div>Sketcher::Solve()-DogLeg-T:0</div>
            </div>
            <div className="flex w-[12px] shrink-0 flex-col items-center border-l border-[#dcdcdc] bg-[#f0f0f0]">
              <div className="flex h-[11px] items-center"><ScrollArrow d="u" /></div>
              <div className="h-[99px]" />
              <div className="h-[34px] w-[10px] bg-[#c2c2c2]" />
              <div className="flex-1" />
              <div className="flex h-[11px] items-center"><ScrollArrow d="d" /></div>
            </div>
          </div>
        </div>
      </div>

      {/* Status */}
      <div className="flex h-[36px] shrink-0 items-center pb-[1px] pl-[6px] whitespace-pre text-[#555]">
        <span className="mb-[2px] w-[1052px] shrink-0 tracking-[-0.04px]">Preselected: a2pLCS017 - _04_999_spikeTriggerHousingFunction.a2pLCS017.CoordinateSystem (11.749, -120.607, -36.2871)</span>
        <svg width="14" height="22" viewBox="0 0 14 22" fill="none">
          <rect x="1" y="1" width="12" height="20" rx="6" stroke="#111" strokeWidth="2" />
          <path d="M7 5v5" stroke="#111" strokeWidth="2.400" />
        </svg>
        <svg className="ml-[10px]" width="8" height="8" viewBox="0 0 8 8"><path d="M0 1h8L4 8z" fill="#8a8a8a" /></svg>
        <span className="mb-[2px] ml-[14px]">2.73 " x 1.82 "</span>
      </div>
    </div>
  );
}
